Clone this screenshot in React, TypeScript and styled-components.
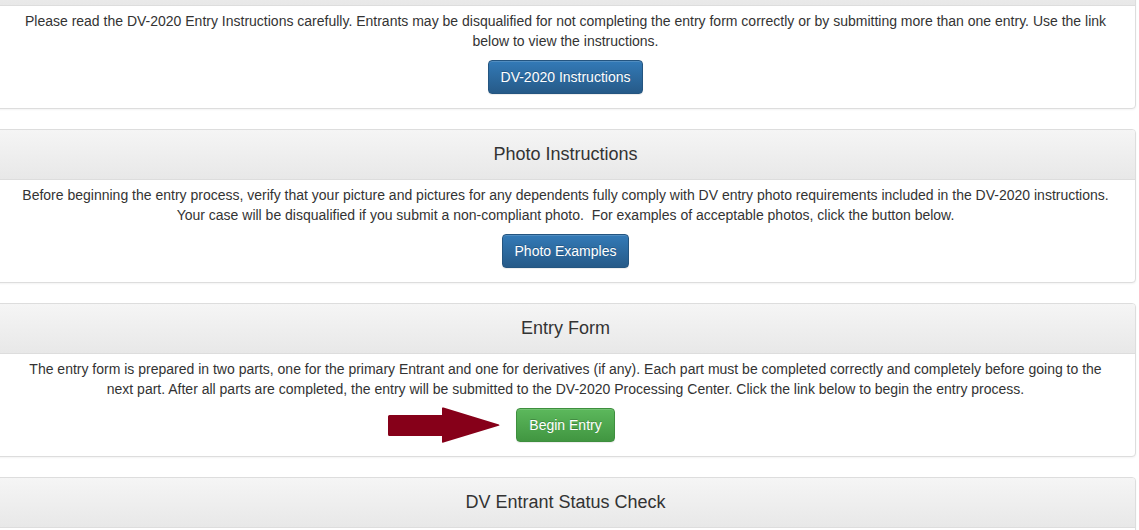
import React from "react";
import styled, { createGlobalStyle, css } from "styled-components";

const GlobalStyle = createGlobalStyle`
  html, body {
    margin: 0;
    padding: 0;
    background: #fff;
    overflow: hidden;
  }
  body {
    font-family: "Liberation Sans", Arial, Helvetica, sans-serif;
    font-size: 14px;
    line-height: 20px;
    color: #333;
  }
`;

const Page = styled.div`
  margin-top: -45px;
  margin-left: -5px;
  width: 1141px;
`;

const Panel = styled.section`
  background: #fff;
  border: 1px solid #ddd;
  border-radius: 4px;
  margin-bottom: 20px;
  box-shadow: 0 1px 2px rgba(0, 0, 0, 0.05);
`;

const Heading = styled.div`
  box-sizing: content-box;
  height: 48px;
  padding-bottom: 1px;
  display: flex;
  align-items: center;
  justify-content: center;
  border-bottom: 1px solid #ddd;
  border-radius: 3px 3px 0 0;
  background-image: linear-gradient(to bottom, #f5f5f5 0%, #e8e8e8 100%);
`;

const Title = styled.h3`
  margin: 0;
  font-size: 18px;
  font-weight: normal;
  line-height: 20px;
  color: #333;
`;

const Body = styled.div`
  padding: 5px 23px 14px;
  text-align: center;
`;

const Text = styled.p`
  margin: 0 0 9px;
  line-height: 20px;
`;

const ButtonRow = styled.div`
  display: flex;
  justify-content: center;
`;

const ButtonWrap = styled.div`
  position: relative;
  display: inline-flex;
`;

const variants = {
  primary: css`
    background-image: linear-gradient(to bottom, #337ab7 0%, #265a88 100%);
    border-color: #245580;
  `,
  success: css`
    background-image: linear-gradient(to bottom, #5cb85c 0%, #419641 100%);
    border-color: #3e8f3e;
  `,
};

const Button = styled.button<{ $variant: "primary" | "success" }>`
  height: 34px;
  padding: 6px 12px;
  font-family: inherit;
  font-size: 14px;
  line-height: 20px;
  color: #fff;
  border: 1px solid transparent;
  border-radius: 4px;
  text-shadow: 0 -1px 0 rgba(0, 0, 0, 0.2);
  box-shadow: inset 0 1px 0 rgba(255, 255, 255, 0.15), 0 1px 1px rgba(0, 0, 0, 0.075);
  cursor: pointer;
  ${(p) => variants[p.$variant]}
`;

const Arrow = styled.svg`
  position: absolute;
  right: calc(100% + 16px);
  top: -1px;
  width: 112px;
  height: 36px;
`;

const PointerArrow = () => (
  <Arrow viewBox="0 0 112 36">
    <path
      d="M1.5 8 H54 V1 Q54 0 55.5 0.6 L111 17.6 L111.5 18.4 L55.5 35.4 Q54 36 54 35 V29 H1.5 Q0 29 0 27.5 V9.5 Q0 8 1.5 8 Z"
      fill="#860019"
    />
  </Arrow>
);

export default function App() {
  return (
    <>
      <GlobalStyle />
      <Page>
        <Panel>
          <Heading />
          <Body>
            <Text>
              Please read the DV-2020 Entry Instructions carefully. Entrants may be disqualified for not
              completing the entry form correctly or by submitting more than one entry. Use the link below
              to view the instructions.
            </Text>
            <ButtonRow>
              <Button $variant="primary">DV-2020 Instructions</Button>
            </ButtonRow>
          </Body>
        </Panel>

        <Panel>
          <Heading>
            <Title>Photo Instructions</Title>
          </Heading>
          <Body>
            <Text>
              Before beginning the entry process, verify that your picture and pictures for any dependents
              fully comply with DV entry photo requirements included in the DV-2020 instructions. Your case
              will be disqualified if you submit a non-compliant photo.&nbsp; For examples of acceptable
              photos, click the button below.
            </Text>
            <ButtonRow>
              <Button $variant="primary">Photo Examples</Button>
            </ButtonRow>
          </Body>
        </Panel>

        <Panel>
          <Heading>
            <Title>Entry Form</Title>
          </Heading>
          <Body>
            <Text>
              The entry form is prepared in two parts, one for the primary Entrant and one for derivatives
              (if any). Each part must be completed correctly and completely before going to the next part.
              After all parts are completed, the entry will be submitted to the DV-2020 Processing Center.
              Click the link below to begin the entry process.
            </Text>
            <ButtonRow>
              <ButtonWrap>
                <PointerArrow />
                <Button $variant="success">Begin Entry</Button>
              </ButtonWrap>
            </ButtonRow>
          </Body>
        </Panel>

        <Panel>
          <Heading>
            <Title>DV Entrant Status Check</Title>
          </Heading>
          <Body />
        </Panel>
      </Page>
    </>
  );
}
